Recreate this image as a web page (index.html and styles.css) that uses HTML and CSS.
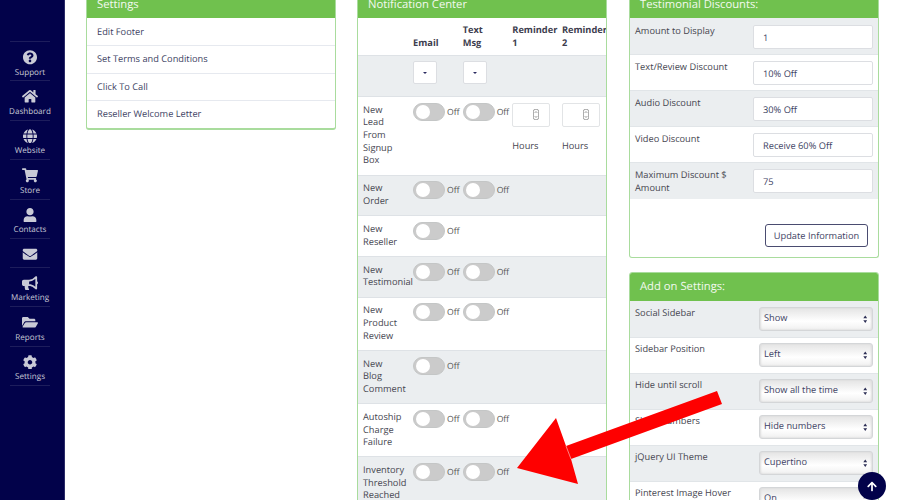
FILE: index.html
```html
<!DOCTYPE html>
<html lang="en">
<head>
<meta charset="utf-8">
<title>Settings</title>
<link rel="stylesheet" href="styles.css">
</head>
<body>
<nav class="side">
  <a class="nav"><svg class="ic" viewBox="0 0 512 512"><path d="M504 256c0 136.997-111.043 248-248 248S8 392.997 8 256C8 119.083 119.043 8 256 8s248 111.083 248 248zM262.655 90c-54.497 0-89.255 22.957-116.549 63.758-3.536 5.286-2.353 12.415 2.715 16.258l34.699 26.31c5.205 3.947 12.621 3.008 16.665-2.122 17.864-22.658 30.113-35.797 57.303-35.797 20.429 0 45.698 13.148 45.698 32.958 0 14.976-12.363 22.667-32.534 33.976C247.128 238.528 216 254.941 216 296v4c0 6.627 5.373 12 12 12h56c6.627 0 12-5.373 12-12v-1.333c0-28.462 83.186-29.647 83.186-106.667 0-58.002-60.165-102-116.531-102zM256 338c-25.365 0-46 20.635-46 46 0 25.364 20.635 46 46 46s46-20.636 46-46c0-25.365-20.635-46-46-46z"/></svg><span>Support</span></a>
  <a class="nav"><svg class="ic" viewBox="0 0 576 512"><path d="M280.37 148.26L96 300.11V464a16 16 0 0 0 16 16l112.06-.29a16 16 0 0 0 15.92-16V368a16 16 0 0 1 16-16h64a16 16 0 0 1 16 16v95.64a16 16 0 0 0 16 16.05L464 480a16 16 0 0 0 16-16V300L295.67 148.26a12.19 12.19 0 0 0-15.3 0zM571.6 251.47L488 182.56V44.05a12 12 0 0 0-12-12h-56a12 12 0 0 0-12 12v72.61L318.47 43a48 48 0 0 0-61 0L4.34 251.47a12 12 0 0 0-1.6 16.9l25.5 31A12 12 0 0 0 45.15 301l235.22-193.74a12.19 12.19 0 0 1 15.3 0L530.9 301a12 12 0 0 0 16.9-1.6l25.5-31a12 12 0 0 0-1.7-16.93z"/></svg><span>Dashboard</span></a>
  <a class="nav"><svg class="ic" viewBox="0 0 496 512"><path d="M336.5 160C322 70.7 287.8 8 248 8s-74 62.7-88.5 152h177zM152 256c0 22.2 1.2 43.5 3.3 64h185.3c2.1-20.5 3.3-41.8 3.3-64s-1.2-43.5-3.3-64H155.3c-2.1 20.5-3.3 41.8-3.3 64zm324.7-96c-28.6-67.9-86.5-120.4-158-141.6 24.4 33.8 41.2 84.7 50 141.6h108zM177.2 18.4C105.8 39.6 47.8 92.1 19.3 160h108c8.7-56.9 25.5-107.8 49.9-141.6zM487.4 192H372.7c2.1 21 3.3 42.5 3.3 64s-1.2 43-3.3 64h114.6c5.5-20.5 8.6-41.8 8.6-64s-3.1-43.5-8.5-64zM120 256c0-21.5 1.2-43 3.3-64H8.6C3.2 212.5 0 233.8 0 256s3.2 43.5 8.6 64h114.6c-2-21-3.2-42.5-3.2-64zm39.5 96c14.5 89.3 48.7 152 88.5 152s74-62.7 88.5-152h-177zm159.3 141.6c71.4-21.2 129.4-73.7 158-141.6h-108c-8.8 56.9-25.6 107.8-50 141.6zM19.3 352c28.6 67.9 86.5 120.4 158 141.6-24.4-33.8-41.2-84.7-50-141.6h-108z"/></svg><span>Website</span></a>
  <a class="nav"><svg class="ic" viewBox="0 0 576 512"><path d="M528.12 301.319l47.273-208C578.806 78.301 567.391 64 551.99 64H159.208l-9.166-44.81C147.758 8.021 137.93 0 126.529 0H24C10.745 0 0 10.745 0 24v16c0 13.255 10.745 24 24 24h69.883l70.248 343.435C147.325 417.1 136 435.222 136 456c0 30.928 25.072 56 56 56s56-25.072 56-56c0-15.674-6.447-29.835-16.824-40h209.647C430.447 426.165 424 440.326 424 456c0 30.928 25.072 56 56 56s56-25.072 56-56c0-22.172-12.888-41.332-31.579-50.405l5.517-24.276c3.413-15.018-8.002-29.319-23.403-29.319H218.117l-6.545-32h293.145c11.206 0 20.92-7.754 23.403-18.681z"/></svg><span>Store</span></a>
  <a class="nav"><svg class="ic" viewBox="0 0 448 512"><path d="M224 256c70.7 0 128-57.3 128-128S294.7 0 224 0 96 57.3 96 128s57.3 128 128 128zm89.6 32h-16.7c-22.2 10.2-46.9 16-72.9 16s-50.6-5.8-72.9-16h-16.7C60.2 288 0 348.2 0 422.4V464c0 26.5 21.5 48 48 48h352c26.5 0 48-21.5 48-48v-41.6c0-74.2-60.2-134.4-134.4-134.4z"/></svg><span>Contacts</span></a>
  <a class="nav nav-mail"><svg class="ic" viewBox="0 0 512 512"><path d="M502.3 190.8c3.9-3.1 9.7-.2 9.7 4.7V400c0 26.5-21.5 48-48 48H48c-26.5 0-48-21.5-48-48V195.6c0-5 5.7-7.8 9.7-4.7 22.4 17.4 52.1 39.5 154.1 113.6 21.1 15.4 56.7 47.8 92.2 47.6 35.7.3 72-32.8 92.3-47.6 102-74.1 131.6-96.3 154-113.7zM256 320c23.2.4 56.6-29.2 73.4-41.4 132.7-96.3 142.8-104.7 173.4-128.7 5.8-4.5 9.2-11.5 9.2-18.9v-19c0-26.5-21.5-48-48-48H48C21.5 64 0 85.5 0 112v19c0 7.4 3.4 14.3 9.2 18.9 30.6 23.9 40.7 32.4 173.4 128.7 16.8 12.2 50.2 41.8 73.4 41.4z"/></svg></a>
  <a class="nav"><svg class="ic" viewBox="0 0 576 512"><path d="M576 240c0-23.63-12.95-44.04-32-55.12V32.01C544 23.26 537.02 0 512 0c-7.12 0-14.19 2.38-19.98 7.02l-85.03 68.03C364.28 109.19 310.66 128 256 128H64c-35.35 0-64 28.65-64 64v96c0 35.35 28.65 64 64 64h33.7c-1.39 10.48-2.18 21.14-2.18 32 0 39.77 9.26 77.35 25.56 110.94 5.19 10.69 16.52 17.06 28.4 17.06h74.28c26.05 0 41.69-29.84 25.9-50.56-16.4-21.52-26.15-48.36-26.15-77.44 0-11.11 1.62-21.79 4.41-32H256c54.66 0 108.28 18.81 150.98 52.95l85.03 68.03a32.023 32.023 0 0 0 19.98 7.02c24.92 0 32-22.78 32-32V295.13C563.05 284.04 576 263.63 576 240zm-96 141.42l-33.05-26.44C392.95 311.78 325.12 288 256 288v-96c69.12 0 136.95-23.78 190.95-66.98L480 98.58v282.84z"/></svg><span>Marketing</span></a>
  <a class="nav"><svg class="ic" viewBox="0 0 576 512"><path d="M572.694 292.093L500.27 416.248A63.997 63.997 0 0 1 444.989 448H45.025c-18.523 0-30.064-20.093-20.731-36.093l72.424-124.155A64 64 0 0 1 152 256h399.964c18.523 0 30.064 20.093 20.73 36.093zM152 224h328v-48c0-26.51-21.49-48-48-48H272l-64-64H48C21.49 64 0 85.49 0 112v278.046l69.077-118.418C86.214 242.25 117.989 224 152 224z"/></svg><span>Reports</span></a>
  <a class="nav"><svg class="ic" viewBox="0 0 512 512"><path d="M487.4 315.7l-42.6-24.6c4.3-23.2 4.3-47 0-70.2l42.6-24.6c4.9-2.8 7.1-8.6 5.5-14-11.1-35.6-30-67.8-54.7-94.6-3.8-4.1-10-5.1-14.8-2.3L380.8 110c-17.9-15.4-38.5-27.3-60.8-35.1V25.8c0-5.6-3.9-10.5-9.4-11.7-36.7-8.2-74.3-7.8-109.2 0-5.5 1.2-9.4 6.1-9.4 11.7V75c-22.2 7.9-42.8 19.8-60.8 35.1L88.7 85.5c-4.9-2.8-11-1.9-14.8 2.3-24.7 26.7-43.6 58.9-54.7 94.6-1.7 5.4.6 11.2 5.5 14L67.3 221c-4.3 23.2-4.3 47 0 70.2l-42.6 24.6c-4.9 2.8-7.1 8.6-5.5 14 11.1 35.6 30 67.8 54.7 94.6 3.8 4.1 10 5.1 14.8 2.3l42.6-24.6c17.9 15.4 38.5 27.3 60.8 35.1v49.2c0 5.6 3.9 10.5 9.4 11.7 36.7 8.2 74.3 7.8 109.2 0 5.5-1.2 9.4-6.1 9.4-11.7v-49.2c22.2-7.9 42.8-19.8 60.8-35.1l42.6 24.6c4.9 2.8 11 1.9 14.8-2.3 24.7-26.7 43.6-58.9 54.7-94.6 1.5-5.5-.7-11.3-5.6-14.1zM256 336c-44.1 0-80-35.9-80-80s35.9-80 80-80 80 35.9 80 80-35.9 80-80 80z"/></svg><span>Settings</span></a>
</nav>

<main class="columns">
  <section class="col">
    <div class="panel panel-links">
      <h2 class="panel-head">Settings</h2>
      <a class="link-row">Edit Footer</a>
      <a class="link-row">Set Terms and Conditions</a>
      <a class="link-row">Click To Call</a>
      <a class="link-row">Reseller Welcome Letter</a>
    </div>
  </section>

  <section class="col col-mid">
    <div class="panel">
      <h2 class="panel-head">Notification Center</h2>
      <table class="notif">
        <thead>
          <tr><th></th><th>Email</th><th>Text<br>Msg</th><th>Reminder 1</th><th>Reminder 2</th></tr>
        </thead>
        <tbody>
          <tr class="grey">
            <td></td>
            <td><button class="drop"><i class="caret"></i></button></td>
            <td><button class="drop"><i class="caret"></i></button></td>
            <td></td><td></td>
          </tr>
          <tr>
            <td>New Lead From Signup Box</td>
            <td><span class="tog"><i></i></span><small>Off</small></td>
            <td><span class="tog"><i></i></span><small>Off</small></td>
            <td><div class="num"><svg viewBox="0 0 6 11"><rect x=".4" y=".4" width="5.2" height="10.2" rx="1.8"/><path d="M1.6 4L3 2.5 4.4 4M1.6 7L3 8.5 4.4 7"/></svg></div><p class="hours">Hours</p></td>
            <td><div class="num"><svg viewBox="0 0 6 11"><rect x=".4" y=".4" width="5.2" height="10.2" rx="1.8"/><path d="M1.6 4L3 2.5 4.4 4M1.6 7L3 8.5 4.4 7"/></svg></div><p class="hours">Hours</p></td>
          </tr>
          <tr class="grey"><td>New Order</td><td><span class="tog"><i></i></span><small>Off</small></td><td><span class="tog"><i></i></span><small>Off</small></td><td></td><td></td></tr>
          <tr><td>New Reseller</td><td><span class="tog"><i></i></span><small>Off</small></td><td></td><td></td><td></td></tr>
          <tr class="grey"><td>New Testimonial</td><td><span class="tog"><i></i></span><small>Off</small></td><td><span class="tog"><i></i></span><small>Off</small></td><td></td><td></td></tr>
          <tr><td>New Product Review</td><td><span class="tog"><i></i></span><small>Off</small></td><td><span class="tog"><i></i></span><small>Off</small></td><td></td><td></td></tr>
          <tr class="grey"><td>New Blog Comment</td><td><span class="tog"><i></i></span><small>Off</small></td><td></td><td></td><td></td></tr>
          <tr><td>Autoship Charge Failure</td><td><span class="tog"><i></i></span><small>Off</small></td><td><span class="tog"><i></i></span><small>Off</small></td><td></td><td></td></tr>
          <tr class="grey"><td>Inventory Threshold Reached</td><td><span class="tog"><i></i></span><small>Off</small></td><td><span class="tog"><i></i></span><small>Off</small></td><td></td><td></td></tr>
        </tbody>
      </table>
    </div>
  </section>

  <section class="col">
    <div class="panel panel-form">
      <h2 class="panel-head">Testimonial Discounts:</h2>
      <div class="form-row grey"><label>Amount to Display</label><input class="txt" value="1"></div>
      <div class="form-row"><label>Text/Review Discount</label><input class="txt" value="10% Off"></div>
      <div class="form-row grey"><label>Audio Discount</label><input class="txt" value="30% Off"></div>
      <div class="form-row"><label>Video Discount</label><input class="txt" value="Receive 60% Off"></div>
      <div class="form-row form-row-tall grey"><label>Maximum Discount $ Amount</label><input class="txt" value="75"></div>
      <div class="form-foot"><button class="btn">Update Information</button></div>
    </div>

    <div class="panel panel-addon">
      <h2 class="panel-head panel-head-full">Add on Settings:</h2>
      <div class="form-row addon grey"><label>Social Sidebar</label><div class="sel"><span>Show</span><svg viewBox="0 0 6 10"><path d="M3 0l2.6 3.8H.4zM3 10L.4 6.2h5.2z"/></svg></div></div>
      <div class="form-row addon"><label>Sidebar Position</label><div class="sel"><span>Left</span><svg viewBox="0 0 6 10"><path d="M3 0l2.6 3.8H.4zM3 10L.4 6.2h5.2z"/></svg></div></div>
      <div class="form-row addon grey"><label>Hide until scroll</label><div class="sel"><span>Show all the time</span><svg viewBox="0 0 6 10"><path d="M3 0l2.6 3.8H.4zM3 10L.4 6.2h5.2z"/></svg></div></div>
      <div class="form-row addon"><label>Show numbers</label><div class="sel"><span>Hide numbers</span><svg viewBox="0 0 6 10"><path d="M3 0l2.6 3.8H.4zM3 10L.4 6.2h5.2z"/></svg></div></div>
      <div class="form-row addon grey"><label>jQuery UI Theme</label><div class="sel"><span>Cupertino</span><svg viewBox="0 0 6 10"><path d="M3 0l2.6 3.8H.4zM3 10L.4 6.2h5.2z"/></svg></div></div>
      <div class="form-row addon"><label>Pinterest Image Hover</label><div class="sel"><span>On</span><svg viewBox="0 0 6 10"><path d="M3 0l2.6 3.8H.4zM3 10L.4 6.2h5.2z"/></svg></div></div>
    </div>
  </section>
</main>

<svg class="red-arrow" viewBox="0 0 900 500"><polygon points="517,468 556,418 566,446 717,391 722,404 571,459 578,484"/><line x1="566" y1="446" x2="571" y2="459"/></svg>

<a class="to-top"><svg viewBox="0 0 448 512"><path d="M34.9 289.5l-22.2-22.2c-9.4-9.4-9.4-24.6 0-33.9L207 39c9.4-9.4 24.6-9.4 33.9 0l194.3 194.3c9.4 9.4 9.4 24.6 0 33.9L413 289.4c-9.5 9.5-25 9.3-34.3-.4L264 168.6V456c0 13.3-10.7 24-24 24h-32c-13.3 0-24-10.7-24-24V168.6L69.2 289.1c-9.3 9.8-24.8 10-34.3.4z"/></svg></a>
</body>
</html>
```
FILE: styles.css
```css
* { box-sizing: border-box; }
html, body { height: 100%; }
body {
  margin: 0;
  display: flex;
  overflow: hidden;
  background: #fff;
  color: #45454f;
  font: 9.25px/12.6px "Open Sans", sans-serif;
  text-rendering: geometricPrecision;
}
.side {
  flex: 0 0 65px;
  height: 100%;
  padding-top: 41px;
  background: #02024a;
  border-right: 1px solid #2b2b68;
  display: flex;
  flex-direction: column;
}
.nav {
  width: 40px;
  margin-left: 10px;
  height: 39.4px;
  flex: none;
  border-top: 1px solid #1d1d5c;
  color: #c9cad6;
  font-size: 8.1px;
  line-height: 10px;
  text-align: center;
  display: flex;
  flex-direction: column;
  align-items: center;
  padding-top: 8px;
  white-space: nowrap;
}
.nav-mail { height: 29px; }
.nav:last-child { height: 40px; border-bottom: 1px solid #1d1d5c; }
.ic { height: 14.5px; width: 16px; fill: #c9cad6; flex: none; margin-bottom: 3px; }
.columns {
  flex: 1;
  display: grid;
  grid-template-columns: 250px 251px 250px;
  column-gap: 21px;
  padding-left: 21px;
  margin-top: -16px;
  align-items: start;
}
.col { display: flex; flex-direction: column; gap: 14px; min-width: 0; }
.col-mid { padding-right: 1px; }
.panel {
  border: 1px solid #a9dc9d;
  border-top: 0;
  border-radius: 3px;
  background: #fff;
  overflow: hidden;
}
.panel-links { border-bottom-width: 2px; }
.panel-head {
  margin: 0 -1px;
  height: 34px;
  padding: 13px 11px 0;
  background: #70c14e;
  color: #f2f9ee;
  font-size: 11.25px;
  line-height: 16px;
  font-weight: 400;
}
.panel-head-full { height: 28px; padding-top: 6px; }
.link-row {
  display: block;
  height: 27.4px;
  padding: 7px 10px 0;
  border-top: 1px solid #e6e9ef;
  color: #3d3f63;
}
.link-row:first-of-type { border-top-color: transparent; }
.notif { width: 100%; table-layout: fixed; border-collapse: collapse; }
.notif th, .notif td { padding: 6.75px 12px 7.75px 5px; vertical-align: top; border-top: 1px solid #dee2e6; }
.notif th { border-top: 0; padding: 4px 0 5px 5.5px; vertical-align: bottom; font-weight: 700; color: #3d3d4e; text-align: left; height: 37px; }
.notif td:nth-child(n+2) { padding: 5.6px 0 0 5.5px; white-space: nowrap; }
.grey { background: #ebeef0; }
.drop {
  display: block;
  width: 24px;
  height: 23px;
  padding: 0;
  background: #fff;
  border: 1px solid #dcdee2;
  border-radius: 2px;
  margin-bottom: 12px;
}
.caret {
  display: block;
  margin: 0 auto;
  width: 0;
  height: 0;
  border-left: 2.5px solid transparent;
  border-right: 2.5px solid transparent;
  border-top: 2.5px solid #2a2a60;
}
.tog {
  display: inline-block;
  width: 32px;
  height: 18px;
  border-radius: 9px;
  background: #cbcbcb;
  border: 1px solid #c4c6c6;
  padding: 1px 2px;
  vertical-align: top;
}
.tog i { display: block; width: 14px; height: 14px; border-radius: 50%; background: #fff; }
small { font-size: 8.6px; line-height: 19px; margin-left: 2px; color: #555; vertical-align: top; }
.num {
  width: 38px;
  height: 24px;
  background: #fff;
  border: 1px solid #e2e4e6;
  border-radius: 2px;
  display: flex;
  align-items: center;
  justify-content: flex-end;
  padding-right: 10px;
}
.num svg { width: 6px; height: 11px; fill: none; stroke: #666; stroke-width: .6; }
.hours { margin: 13px 0 0; }
.form-row {
  height: 36px;
  display: flex;
  align-items: flex-start;
  justify-content: space-between;
  padding: 6px 5px 0;
  border-top: 1px solid #e1e5e8;
}
.form-row:first-of-type { border-top-color: transparent; }
.form-row-tall { height: 37px; }
.form-row label { width: 108px; }
.txt {
  width: 120px;
  height: 24px;
  border: 1px solid #dcdee2;
  border-radius: 2px;
  padding: 0 9px;
  font: 9.25px "Open Sans", sans-serif;
  text-rendering: geometricPrecision;
  color: #3d3f63;
  background: #fff;
}
.form-foot { height: 58px; display: flex; justify-content: flex-end; align-items: flex-start; padding: 25px 10px 0; }
.btn {
  width: 103px;
  height: 23px;
  padding: 0;
  background: #fff;
  border: 1px solid #4a4c70;
  border-radius: 3px;
  color: #3d3f63;
  font: 9.25px "Open Sans", sans-serif;
  text-rendering: geometricPrecision;
}
.panel-addon { border-top: 1px solid #a9dc9d; }
.addon { padding-top: 5px; }
.sel {
  position: relative;
  width: 114px;
  height: 24px;
  padding: 4px 4px 0;
  border: 1px solid #d4d6d8;
  border-radius: 3px;
  background: linear-gradient(#e4e4e4, #fff 60%, #f0f0f0);
  box-shadow: inset 1px 0 2px #ddd, inset -1px 0 2px #ddd;
  color: #3d3f63;
  white-space: nowrap;
}
.sel svg { position: absolute; right: 5px; top: 7px; width: 4.5px; height: 8.5px; fill: #2d2f55; }
.red-arrow { position: absolute; left: 0; top: 0; width: 900px; height: 500px; pointer-events: none; }
.red-arrow polygon { fill: #fe0000; }
.red-arrow line { stroke: #ffd5d5; stroke-width: .6; }
.to-top {
  position: absolute;
  left: 858px;
  top: 472px;
  width: 28px;
  height: 28px;
  border-radius: 50%;
  background: #02024a;
  display: flex;
  align-items: center;
  justify-content: center;
}
.to-top svg { width: 10px; height: 11px; fill: #fff; }
```
